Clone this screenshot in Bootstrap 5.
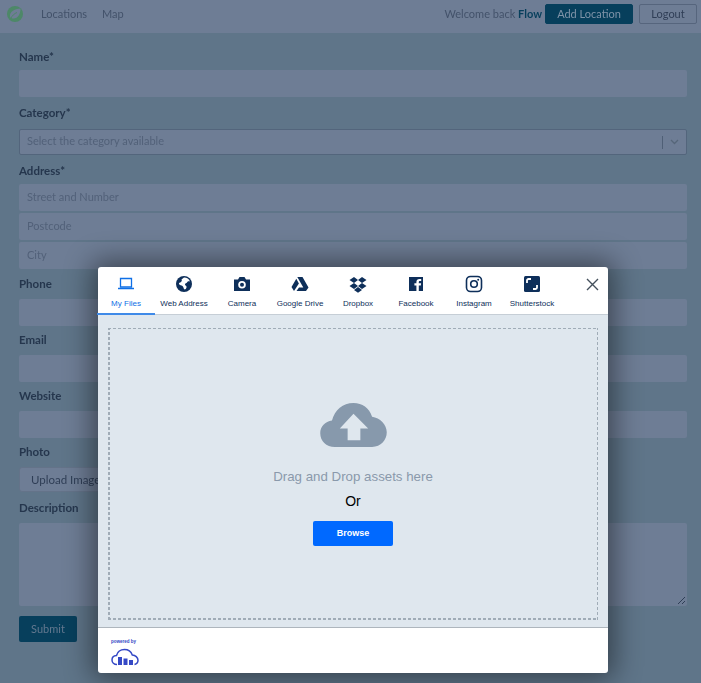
<!DOCTYPE html>
<html lang="en">
<head>
  <meta charset="UTF-8">
  <meta name="viewport" content="width=device-width, initial-scale=1.0">
  <title>Add Location</title>
  <link href="https://cdn.jsdelivr.net/npm/bootstrap@5.3.0/dist/css/bootstrap.min.css" rel="stylesheet">
  <style>
    html, body { height: 100%; }
    body { background: #5f7589; font-family: "Lato", "Noto Sans", sans-serif; overflow: hidden; }
    .page-dim { filter: blur(.5px); }
    .top-bar { height: 33px; background: #6e7d95; padding: 0 4px 5px 6px; font-size: 11px; }
    .top-bar .nav-link { color: #43526a; padding: 0; margin-left: 15px; }
    .top-bar .nav-link.first-link { margin-left: 17px; }
    .welcome-txt { color: #43526a; margin-right: 3px; }
    .welcome-txt b { color: #073f5c; }
    .btn-add { background: #073f5c; color: #7f93a8; border: 1px solid #073f5c; font-size: 11px; height: 20px; width: 88px; padding: 0; line-height: 18px; border-radius: 2px; margin-right: 6px; }
    .btn-out { background: transparent; color: #2f3e56; border: 1px solid #56657d; font-size: 11px; height: 20px; width: 58px; padding: 0; line-height: 18px; border-radius: 2px; }
    .form-wrap { padding: 14px 14px 0 19px; }
    .f-label { display: block; font-size: 11.5px; font-weight: 700; color: #25364d; height: 16px; line-height: 16px; margin: 0 0 7px; }
    .f-label.lbl-top { height: 17px; line-height: 19px; margin-bottom: 6px; }
    .f-label.lbl-select { margin-bottom: 9px; }
    .f-input { display: block; width: 100%; height: 27px; background: #6e7d95; border: 0; border-radius: 2px; padding: 0 8px; font-size: 11px; color: #526179; line-height: 25px; }
    .f-select { height: 26px; line-height: 22px; border: 1px solid #53657c; display: flex; align-items: center; justify-content: space-between; padding: 0 7px 2px; }
    .sel-end { display: flex; align-items: center; gap: 7px; margin-top: 2px; }
    .sel-bar { width: 1px; height: 13px; background: #4f5f76; }
    .gap-field { margin-bottom: 6px; }
    .gap-city { margin-bottom: 7px; }
    .gap-tight { margin-bottom: 2px; }
    .btn-upload { background: #6e7d95; border: 1px solid #647389; color: #2f3e56; font-size: 11.5px; height: 25px; width: 110px; border-radius: 3px; padding: 0 0 0 11px; text-align: left; display: block; margin-bottom: 8px; white-space: nowrap; overflow: hidden; }
    .f-area { height: 83px; position: relative; margin-bottom: 10px; }
    .area-grip { position: absolute; right: 1px; bottom: 1px; }
    .btn-submit { background: #073f5c; color: #63788f; font-size: 11px; width: 58px; height: 26px; padding: 0; border: 0; border-radius: 2px; display: block; }
    .upload-box { position: absolute; left: 98px; top: 267px; width: 510px; height: 406px; background: #fff; border-radius: 3px; box-shadow: 0 0 28px 6px rgba(0, 0, 0, .45); font-family: "Liberation Sans", Arial, sans-serif; display: flex; flex-direction: column; }
    .src-tabs { height: 48px; flex: none; border-bottom: 1px solid #c6ced6; padding-left: 0; }
    .src-tab { width: 58px; height: 48px; display: flex; flex-direction: column; align-items: center; padding-top: 8px; color: #0e2f5a; font-size: 8px; line-height: 10px; white-space: nowrap; position: relative; left: -1px; }
    .src-tab svg { height: 18px; width: 18px; margin-bottom: 6px; flex: none; }
    .src-tab.on { color: #0f6fe6; border-bottom: 2px solid #3f8ae8; }
    .close-x { position: absolute; right: 9px; top: 11px; }
    .drop-outer { flex: 1; background: #dfe7ee; padding: 13px 10px 7px; border-bottom: 1px solid #aeb6bd; }
    .drop-zone { height: 100%; display: flex; flex-direction: column; align-items: center; padding-top: 75px;
      background:
        repeating-linear-gradient(90deg, #a0acb7 0 3px, transparent 3px 5px) top / 100% 1px no-repeat,
        repeating-linear-gradient(90deg, #a0acb7 0 3px, transparent 3px 5px) bottom / 100% 2px no-repeat,
        repeating-linear-gradient(0deg, #a0acb7 0 3px, transparent 3px 5px) left / 2px 100% no-repeat,
        repeating-linear-gradient(0deg, #a0acb7 0 3px, transparent 3px 5px) right / 1px 100% no-repeat; }
    .drag-txt { font-size: 13.3px; color: #8a99ab; line-height: 16px; margin-top: 21px; }
    .or-txt { font-size: 14px; color: #000; line-height: 16px; margin-top: 8px; }
    .btn-browse { background: #0069ff; color: #fff; font-size: 9px; font-weight: 700; width: 80px; height: 25px; padding: 0; border: 0; border-radius: 2px; margin-top: 12px; }
    .foot-bar { height: 45px; flex: none; padding: 11px 0 0 13px; color: #3448c5; }
    .pow-txt { font-size: 4.5px; line-height: 5px; font-weight: 700; display: block; }
  </style>
</head>
<body>
  <div class="page-dim">
    <nav class="top-bar d-flex align-items-center">
      <svg width="18" height="18" viewBox="0 0 18 18"><circle cx="9" cy="9" r="8" fill="#4d8868"/><path d="M4 11.500C3.500 7 8 4 14.500 3.500c0 5.500-2.500 10-7 10-1.500 0-3.500-.500-3.500-2z" fill="#6e7d95"/><path d="M4.500 14C6 10.500 8.500 8.500 11 7.500" stroke="#4d8868" fill="none"/></svg>
      <a class="nav-link first-link" href="#">Locations</a>
      <a class="nav-link" href="#">Map</a>
      <div class="ms-auto d-flex align-items-center">
        <span class="welcome-txt">Welcome back <b>Flow</b></span>
        <button class="btn btn-add">Add Location</button>
        <button class="btn btn-out">Logout</button>
      </div>
    </nav>
    <form class="form-wrap">
      <label class="f-label lbl-top">Name*</label>
      <div class="f-input gap-field"></div>
      <label class="f-label lbl-top lbl-select">Category*</label>
      <div class="f-input f-select gap-field">
        <span>Select the category available</span>
        <span class="sel-end"><span class="sel-bar"></span>
          <svg width="9" height="6" viewBox="0 0 9 6"><path d="M1 1l3.500 3.500L8 1" fill="none" stroke="#566679" stroke-width="1.300"/></svg></span>
      </div>
      <label class="f-label lbl-top">Address*</label>
      <div class="f-input gap-tight">Street and Number</div>
      <div class="f-input gap-tight">Postcode</div>
      <div class="f-input gap-city">City</div>
      <label class="f-label">Phone</label>
      <div class="f-input gap-field"></div>
      <label class="f-label">Email</label>
      <div class="f-input gap-field"></div>
      <label class="f-label">Website</label>
      <div class="f-input gap-field"></div>
      <label class="f-label">Photo</label>
      <button type="button" class="btn-upload">Upload Image</button>
      <label class="f-label">Description</label>
      <div class="f-input f-area">
        <svg class="area-grip" width="9" height="9" viewBox="0 0 9 9"><path d="M1 8l7-7M5 8l3-3" stroke="#2f3e56" fill="none"/></svg>
      </div>
      <button type="button" class="btn-submit">Submit</button>
    </form>
  </div>

  <div class="upload-box">
    <div class="src-tabs d-flex">
      <div class="src-tab on">
        <svg viewBox="0 0 18 18"><path d="M3.500 3.500h11v8.500h-11z" fill="none" stroke="#0f6fe6" stroke-width="1.300"/><path d="M1 13.500h16" stroke="#0f6fe6" stroke-width="1.500"/></svg>
        My Files
      </div>
      <div class="src-tab">
        <svg viewBox="0 0 18 18"><circle cx="9" cy="9" r="8" fill="#0e2f5a"/><path d="M9 2.500c3 0 5 1.500 6 4-1.500-.500-2.500 0-3 1s-2 .500-2 2 2 1 1.500 3-2 2.500-2.500 1.500-.500-2-1.500-3-3-.500-3.500-2 1-1 2-2 1-1.500.500-2.500z" fill="#fff"/></svg>
        Web Address
      </div>
      <div class="src-tab">
        <svg viewBox="0 0 18 18"><path d="M1 4.500h4L6.500 2h5L13 4.500h4V16H1z" fill="#0e2f5a"/><circle cx="9" cy="9.800" r="3.800" fill="#fff"/><circle cx="9" cy="9.800" r="2" fill="#0e2f5a"/></svg>
        Camera
      </div>
      <div class="src-tab">
        <svg viewBox="0 0 18 18"><path d="M6.300 2h5.200l6 10.500h-5.200zM5.300 3.800l2.600 4.600L3 16 .5 12zM8 12.500h9.500L15 16H5.500z" fill="#0e2f5a"/></svg>
        Google Drive
      </div>
      <div class="src-tab">
        <svg viewBox="0 0 18 18"><path d="M5 2L.500 5 5 8l4-3zM13 2L9 5l4 3 4.500-3zM.500 11L5 14l4-3-4-3zM17.500 11L13 14l-4-3 4-3zM5 15l4-3 4 3-4 2.800z" fill="#0e2f5a"/></svg>
        Dropbox
      </div>
      <div class="src-tab">
        <svg viewBox="0 0 18 18"><path d="M2 2h14v14h-4.200v-5.500h2l.300-2.200h-2.300V7c0-.700.300-1.100 1.100-1.100h1.300V4c-.500-.100-1.100-.100-1.800-.100-1.800 0-3 1-3 3.100v1.300h-2v2.200h2V16H2z" fill="#0e2f5a"/></svg>
        Facebook
      </div>
      <div class="src-tab">
        <svg viewBox="0 0 18 18"><rect x="1.500" y="1.500" width="15" height="15" rx="4" fill="none" stroke="#0e2f5a" stroke-width="1.600"/><circle cx="9" cy="9" r="3.300" fill="none" stroke="#0e2f5a" stroke-width="1.600"/><circle cx="13.200" cy="4.800" r="1" fill="#0e2f5a"/></svg>
        Instagram
      </div>
      <div class="src-tab">
        <svg viewBox="0 0 18 18"><rect x="1" y="1" width="16" height="16" rx="1.500" fill="#0e2f5a"/><path d="M4 8V5.500C4 4.700 4.700 4 5.500 4H8M14 10v2.500c0 .800-.700 1.500-1.500 1.500H10" fill="none" stroke="#fff" stroke-width="1.800"/></svg>
        Shutterstock
      </div>
    </div>
    <svg class="close-x" width="13" height="13" viewBox="0 0 13 13"><path d="M1 1l11 11M12 1L1 12" stroke="#44505c" stroke-width="1.400" fill="none"/></svg>
    <div class="drop-outer">
      <div class="drop-zone">
        <svg width="67" height="45" viewBox="0 0 68 46"><path d="M15 45C6 45 0 39 0 31c0-7 5-12 12-13C15 7 23 0 34 0c9 0 16 5 19 14 8 1 15 8 15 16 0 8-6 15-15 15z" fill="#8799ac"/><path d="M34 11L20 26h8v12h13V26h8z" fill="#dfe7ee"/></svg>
        <div class="drag-txt">Drag and Drop assets here</div>
        <div class="or-txt">Or</div>
        <button class="btn btn-browse">Browse</button>
      </div>
    </div>
    <div class="foot-bar">
      <span class="pow-txt">powered by</span>
      <svg width="28" height="18" viewBox="0 0 28 18"><path d="M6 16.500C3 16.500 1 14.500 1 12c0-2.500 2-4.300 4.500-4.500C6.500 4 9.500 1.500 13.500 1.500c3.500 0 6.500 2 7.800 5.500 3 .200 5.700 2.400 5.700 5.200 0 2.300-1.500 3.800-3.500 4.300" fill="none" stroke="currentColor" stroke-width="1.500"/><path d="M7 9h4v8H7zM12.500 10.500h4V17h-4zM18 12h4v5h-4z" fill="currentColor"/></svg>
    </div>
  </div>
  <script src="https://cdn.jsdelivr.net/npm/bootstrap@5.3.0/dist/js/bootstrap.bundle.min.js"></script>
</body>
</html>
